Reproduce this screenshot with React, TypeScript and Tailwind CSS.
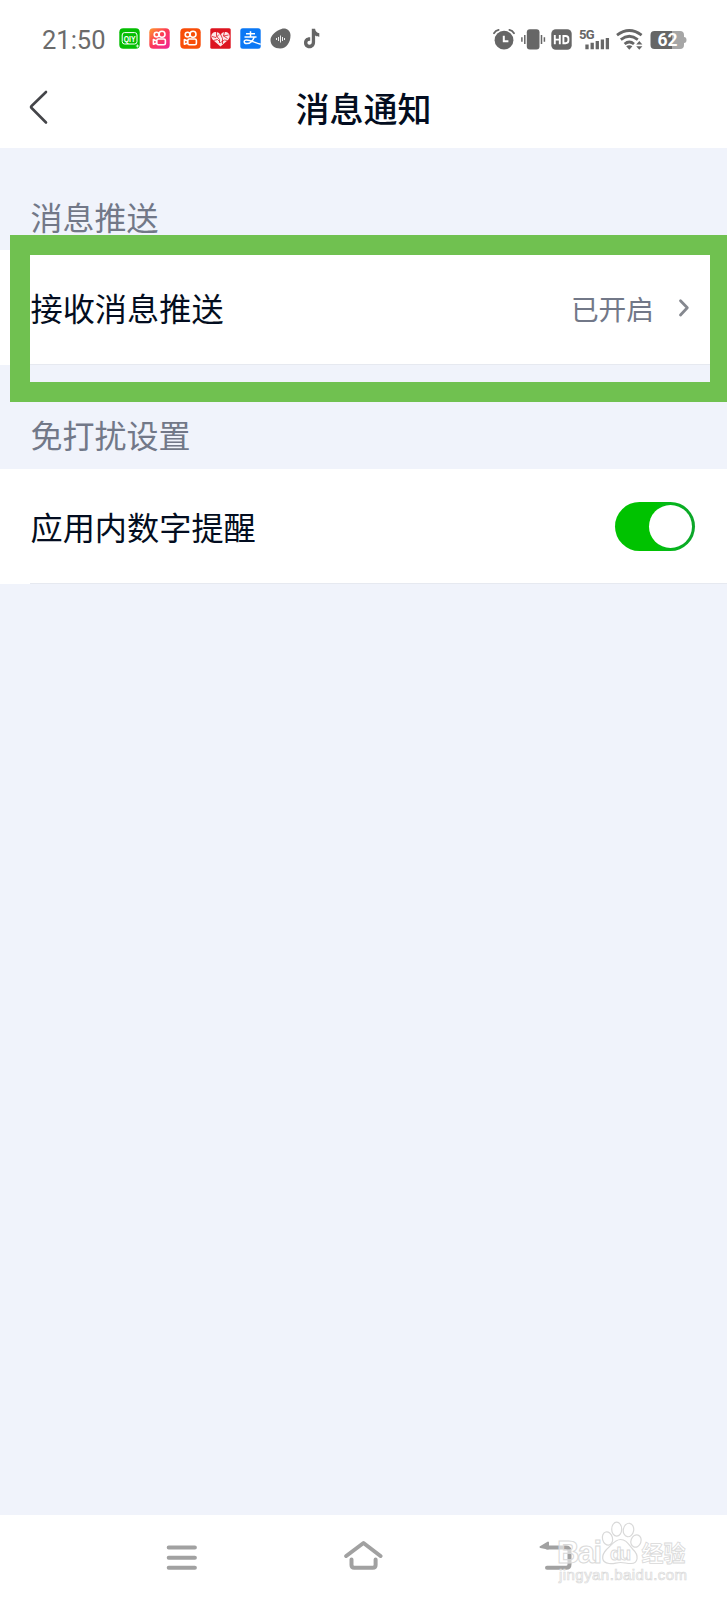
import type { ReactNode } from 'react';

const GREY = '#666666';

function AppBadge({ fill, children }: { fill: string; children: ReactNode }) {
  return (
    <svg width="21" height="21" viewBox="0 0 21 21" className="shrink-0">
      <rect x="0.3" y="0.3" width="20.4" height="20.4" rx="4" fill={fill} />
      {children}
    </svg>
  );
}

function CameraGlyph() {
  return (
    <g fill="none" stroke="#fff" strokeWidth="1.6">
      <circle cx="7.6" cy="6.6" r="2.4" />
      <circle cx="13" cy="6.2" r="3" />
      <rect x="7.8" y="11" width="8.6" height="5.8" rx="1.5" />
      <path d="M7.6 13 4.4 11.6v4.6l3.2-1.2" strokeLinejoin="round" />
    </g>
  );
}

function NotificationIcons() {
  return (
    <div className="mb-px flex items-center gap-[9.3px]">
      <AppBadge fill="#04be02">
        <rect x="3.2" y="4.6" width="14.8" height="11.4" rx="2.4" fill="none" stroke="#fff" strokeWidth="1" />
        <text x="4.8" y="13.5" fontSize="8.8" fontWeight="700" fill="#fff" fontFamily="Liberation Sans, sans-serif" textLength="11.8" lengthAdjust="spacingAndGlyphs">
          QIY
        </text>
        <path d="M16.8 18h3.2M18.4 16.4v3.2" stroke="#fff" strokeWidth="0.8" />
      </AppBadge>
      <AppBadge fill="url(#sunset)">
        <defs>
          <linearGradient id="sunset" x1="0" y1="0" x2="1" y2="1">
            <stop offset="0" stopColor="#ff9a2b" />
            <stop offset="0.45" stopColor="#fc3d55" />
            <stop offset="1" stopColor="#f0209a" />
          </linearGradient>
        </defs>
        <CameraGlyph />
      </AppBadge>
      <AppBadge fill="#f84d08">
        <CameraGlyph />
      </AppBadge>
      <svg width="21" height="21" viewBox="0 0 21 21" className="shrink-0">
        <rect x="0.3" y="0.3" width="20.4" height="20.4" rx="1.5" fill="#dd1420" />
        <path d="M10.5 18.5 3 12C-.5 8 2 3.800 5.800 4c2.200.1 3.700 1.200 4.700 2.700 1-1.500 2.500-2.600 4.700-2.700 3.800-.2 6.300 4 2.800 8Z" fill="#fff" fillOpacity="0.9" />
        <path d="M2 8.5l4 1 3-3M3.5 12.5l4-1 3 3 4-2.5 3 .5M6.5 4v4l3 3.5V15M10.5 6l2 4.5V16M14.5 4l-1 4 4 2.5M18.5 7l-5 1" stroke="#dd1420" strokeWidth="0.8" fill="none" />
      </svg>
      <svg width="21" height="21" viewBox="0 0 21 21" className="shrink-0">
        <rect x="0.3" y="0.3" width="20.4" height="20.4" rx="2.5" fill="#0b78f5" />
        <g fill="none" stroke="#fff" strokeWidth="1.5">
          <path d="M6 5.8h9M4.500 9h12M10.500 3.200V9" />
          <path d="M14.200 9c-1 3.500-4 6.600-7.400 6.600-3.400 0-3.400-3.700-.3-3.700 4 0 8 2.800 14.200 4.300" />
        </g>
      </svg>
      <svg width="21" height="21" viewBox="0 0 21 21" className="shrink-0">
        <path d="M11.5 1c4.5-1.5 8.8 1.5 9 6 .2 7-3.8 13.5-10.3 13.5C4.5 20.5.5 17 .5 12 .5 7.5 6 2.8 11.5 1Z" fill={GREY} />
        <path d="M6.5 10v2M8.5 9v4M10.5 7.5v7M12.5 9v4M14.5 10v2" stroke="#fff" strokeWidth="0.9" />
      </svg>
      <svg width="21" height="21" viewBox="0 0 21 21" className="shrink-0">
        <path d="M10.8.8h3.3c.2 2.5 1.8 4.3 4.2 4.5v3.4c-1.700 0-3-.4-4.200-1.200v6.400c0 4-2.600 6.300-5.700 6.300C5 20.200 3 17.800 3 14.700c0-3.400 2.700-5.700 6.200-5.400v3.500c-1.600-.3-2.800.5-2.800 1.900 0 1.300.9 2 2 2 1.400 0 2.400-.9 2.400-2.700Z" fill={GREY} />
      </svg>
    </div>
  );
}

function SystemIcons() {
  return (
    <div className="flex items-center">
      <svg width="22" height="21" viewBox="0 0 22 21" className="shrink-0">
        <circle cx="11" cy="11.2" r="9.4" fill={GREY} />
        <path d="M1 4.200Q2.500 1.600 5.600.9M21 4.200Q19.500 1.600 16.400.9" stroke={GREY} strokeWidth="1.8" fill="none" strokeLinecap="round" />
        <path d="M10.8 6.8v5.4h4.6" stroke="#fff" strokeWidth="2" fill="none" />
      </svg>
      <svg width="25" height="21" viewBox="0 0 25 21" className="ml-[6px] shrink-0">
        <rect x="5.8" y="0.3" width="12.7" height="20.2" rx="3" fill={GREY} />
        <path d="M3.8 6v9M.9 8.200v4.600M20.500 6v9M23.400 8.200v4.600" stroke={GREY} strokeWidth="1.5" />
      </svg>
      <svg width="21" height="21" viewBox="0 0 21 21" className="ml-[5px] shrink-0">
        <rect x="0.3" y="0.3" width="20.4" height="20.4" rx="4.5" fill={GREY} />
        <path d="M3.8 6v9.200M8.800 6v9.200M3.800 10.600h5M12.400 7v7.200h2.200q2.800 0 2.800-2.600v-2q0-2.600-2.800-2.600Z" stroke="#fff" strokeWidth="1.9" fill="none" />
      </svg>
      <svg width="31" height="24" viewBox="0 -3 31 24" className="-mt-[3px] ml-[7px] shrink-0">
        <text x="0" y="9.8" fontSize="13" fontWeight="700" fill={GREY} fontFamily="Roboto, sans-serif" textLength="15.5">
          5G
        </text>
        <path d="M8 15.500v4.800M13.200 13.800v6.500M18.300 12v8.300M23.400 10.500v9.800M28.400 9v11.300" stroke={GREY} strokeWidth="3.3" />
      </svg>
      <svg width="28" height="21" viewBox="0 0 28 21" className="ml-[6px] shrink-0">
        <g fill="none" stroke={GREY} strokeWidth="2.8">
          <path d="M1 6.200Q13.300-3.200 25.600 6.200" />
          <path d="M4.800 10.600Q13.300 4 21.800 10.600" />
          <path d="M8.600 15Q13.300 11 18 15" />
        </g>
        <path d="M10.200 17.200q3.100-2 6.200 0l-3.100 3.500Z" fill={GREY} />
        <path d="m20.200 15.500 3.100-3.600 3.100 3.600ZM20.200 17.200l3.100 3.600 3.100-3.600Z" fill={GREY} />
      </svg>
      <svg width="37" height="21" viewBox="0 0 37 21" className="ml-[6px] shrink-0">
        <path d="M4.500 2H22v18H4.500A4 4 0 0 1 .5 16V6a4 4 0 0 1 4-4Z" fill={GREY} />
        <path d="M22 2h8a4 4 0 0 1 4 4v2q2.500 0 2.500 3t-2.500 3v2a4 4 0 0 1-4 4h-8Z" fill="#a6a6a6" />
        <text x="17.5" y="17.3" textAnchor="middle" fontSize="17.5" fontWeight="700" fill="#fff" fontFamily="Roboto, sans-serif">
          62
        </text>
      </svg>
    </div>
  );
}

function StatusBar() {
  return (
    <div className="flex h-[78px] items-center justify-between pr-[40px] pl-[42px]">
      <div className="flex items-center gap-[14px]">
        <span className="w-[63px] pt-[4px] font-[Roboto,sans-serif] text-[25.5px] leading-none text-[#6b6b6b]">21:50</span>
        <NotificationIcons />
      </div>
      <SystemIcons />
    </div>
  );
}

function TitleBar() {
  return (
    <header className="grid h-[70px] grid-cols-[1fr_auto_1fr] items-center">
      <svg width="22" height="36" viewBox="0 0 22 36" className="mb-[13px] ml-[28px]" fill="none" stroke="#444549" strokeWidth="2.6" strokeLinecap="round" strokeLinejoin="round">
        <path d="M18 3 3.600 17Q2.600 18 3.600 19L18 33.500" />
      </svg>
      <h1 className="mb-[11px] text-[34px] leading-none font-medium">消息通知</h1>
    </header>
  );
}

function SectionLabel({ children }: { children: string }) {
  return <h2 className="pl-[30.5px] text-[32px] leading-[40px] text-[#727888]">{children}</h2>;
}

function Row({ label, children }: { label: string; children: ReactNode }) {
  return (
    <div className="h-[115px] bg-white">
      <div className="ml-[30px] flex h-full items-center justify-between border-b border-[#e6e9f0] pr-[32.5px]">
        <span className="pl-[0.5px] text-[32.2px] leading-[40px]">{label}</span>
        {children}
      </div>
    </div>
  );
}

function Watermark() {
  return (
    <div className="absolute top-[6px] left-[556px] h-[70px] w-[134px]">
      <svg width="134" height="70" viewBox="0 0 134 70" fill="#fff" fillOpacity="0.55" stroke="#d9d9d9" strokeWidth="1.2">
        <text x="1" y="42" fontSize="31" fontWeight="700" fontFamily="Liberation Sans, sans-serif" textLength="45" strokeWidth="1">
          Bai
        </text>
        <ellipse cx="51.5" cy="17.5" rx="5" ry="6.7" transform="rotate(-15 51.5 17.5)" />
        <ellipse cx="60.7" cy="8.2" rx="5" ry="7" />
        <ellipse cx="72.5" cy="9" rx="5.2" ry="6.8" transform="rotate(10 72.5 9)" />
        <ellipse cx="80" cy="20" rx="5" ry="6.3" transform="rotate(20 80 20)" />
        <path d="M64.5 18.500c6 0 8 5 12.500 10 6.500 6 5 14-2 14-5 0-6-1-10.500-1s-6 1.500-11.500 1c-8-1-8-8-2.500-14 5-4 8-10 14-10Z" />
        <text x="54" y="38.5" fontSize="19" fontWeight="700" fontFamily="Liberation Sans, sans-serif" textLength="21" strokeWidth="0.9">
          du
        </text>
        <text x="85.5" y="40" fontSize="22" fontWeight="700" fontFamily="Noto Sans CJK SC, sans-serif" strokeWidth="0.8">
          经验
        </text>
        <text x="3" y="59" fontSize="15" fontFamily="Liberation Sans, sans-serif" textLength="128" strokeWidth="0.7">
          jingyan.baidu.com
        </text>
      </svg>
    </div>
  );
}

function NavigationBar() {
  return (
    <nav className="relative flex h-[85px] items-start bg-white pt-[25px]">
      <svg width="32" height="32" viewBox="0 0 32 32" className="ml-[166px]" stroke="#a1a1a1" strokeWidth="4" strokeLinecap="round">
        <path d="M2.700 7.500h26.200M2.700 17.700h26.200M2.700 27.800h26.200" />
      </svg>
      <svg width="40" height="32" viewBox="0 0 40 32" className="ml-[145px]" fill="none" stroke="#a1a1a1" strokeWidth="4" strokeLinecap="round" strokeLinejoin="round">
        <path d="m3.200 16 17.300-13L37.500 16" />
        <path d="M8.500 19.500v5.500q0 2.800 2.800 2.800h18.500q2.800 0 2.800-2.800v-5.500" />
      </svg>
      <svg width="34" height="32" viewBox="0 0 34 32" className="ml-[156px]" fill="none" stroke="#a1a1a1" strokeWidth="4" strokeLinecap="round" strokeLinejoin="round">
        <path d="M8 7.500h19q3.500 0 3.500 3.500v13.500q0 3.300-3.500 3.300H8" />
        <path d="M1.500 7 9 2.500v6Z" fill="#a1a1a1" strokeWidth="2" />
      </svg>
      <Watermark />
    </nav>
  );
}

export default function App() {
  return (
    <div className="relative flex h-[1600px] w-full flex-col overflow-hidden bg-[#f0f3fb] font-['Noto_Sans_CJK_SC',sans-serif] text-[#030d20]">
      <div className="h-[148px] bg-white">
        <StatusBar />
        <TitleBar />
      </div>
      <main className="flex-1">
        <section className="pt-[48px]">
          <SectionLabel>消息推送</SectionLabel>
          <div className="mt-[14px]">
            <Row label="接收消息推送">
              <div className="flex items-center gap-[24px] pt-px pr-[4.5px] text-[#727888]">
                <span className="text-[27.7px] leading-[40px]">已开启</span>
                <svg width="12" height="20" viewBox="0 0 12 20" fill="none" stroke="#85888f" strokeWidth="2.8" strokeLinecap="round" strokeLinejoin="round">
                  <path d="m2.500 2.800 6.800 7-6.800 7.200" />
                </svg>
              </div>
            </Row>
          </div>
        </section>
        <section className="pt-[49px]">
          <SectionLabel>免打扰设置</SectionLabel>
          <div className="mt-[15px]">
            <Row label="应用内数字提醒">
              <button type="button" role="switch" aria-checked="true" aria-label="应用内数字提醒" className="flex h-[49px] w-[80px] items-center justify-end rounded-full bg-gradient-to-r from-[#00c200] from-50% to-[#0ca52a] pr-[3px]">
                <span className="size-[43px] rounded-full bg-white" />
              </button>
            </Row>
          </div>
        </section>
      </main>
      <NavigationBar />
      <div className="absolute top-[235px] left-[10px] h-[167px] w-[720px] border-[20px] border-[#70c150]" />
    </div>
  );
}
